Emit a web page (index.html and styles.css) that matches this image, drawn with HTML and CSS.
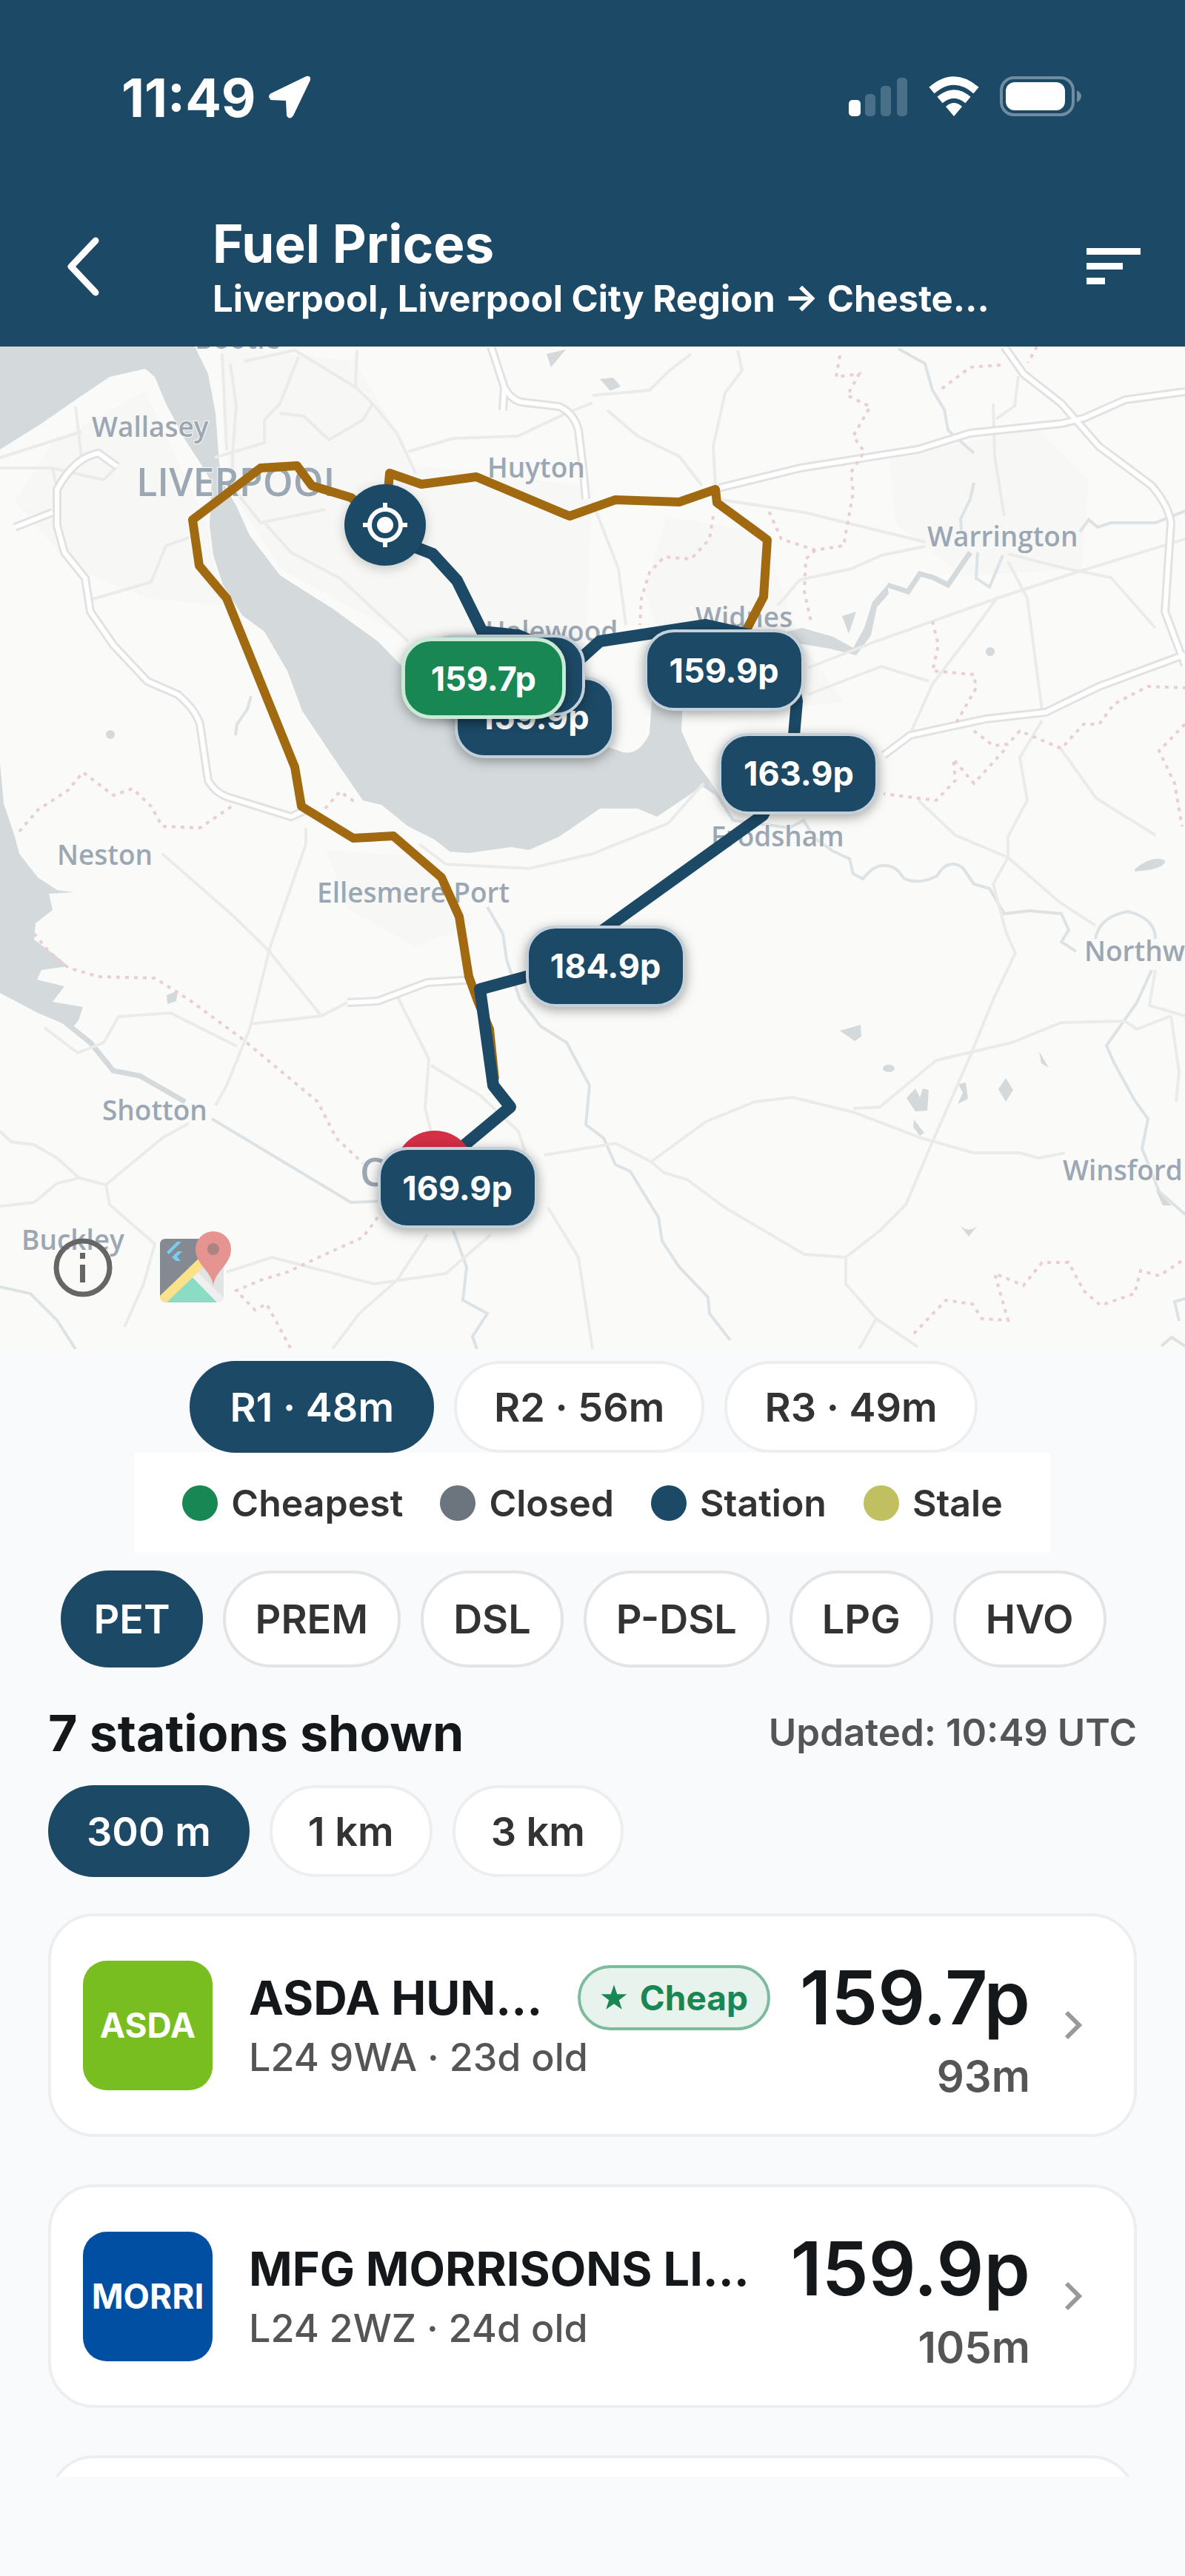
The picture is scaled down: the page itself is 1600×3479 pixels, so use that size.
FILE: index.html
```html
<!DOCTYPE html>
<html lang="en">
<head>
    <meta charset="UTF-8">
    <meta name="viewport" content="width=device-width, initial-scale=1.0">
    <title>Fuel Prices</title>
    <link rel="stylesheet" href="styles.css">
</head>
<body>
    <div class="app">
        <header class="header">
            <div class="status-bar">
                <div class="status-time">
                    <span>11:49</span>
                    <svg width="58" height="58" viewBox="0 0 58 58" aria-hidden="true">
                        <path d="M52 2 L4 25 Q0 28 4 32 L25 33 L26 54 Q29 59 33 54 L56 6 Q57 1 52 2 Z" fill="#fff" stroke="#fff" stroke-width="2"/>
                    </svg>
                </div>
                <svg width="318" height="56" viewBox="0 0 318 56" aria-hidden="true">
                    <!-- signal -->
                    <rect x="0" y="32" width="16" height="22" rx="5" fill="#fff"/>
                    <g fill="#4a6f88">
                        <rect x="22" y="24" width="14" height="30" rx="5"/>
                        <rect x="43" y="13" width="14" height="41" rx="5"/>
                        <rect x="65" y="2" width="14" height="52" rx="5"/>
                    </g>
                    <!-- wifi -->
                    <g fill="none" stroke="#fff" stroke-width="11">
                        <path d="M112 19 Q142 -7 172 19"/>
                        <path d="M123 32 Q142 16 161 32"/>
                    </g>
                    <path d="M131 41 Q142 31 153 41 L142 54 Z" fill="#fff"/>
                    <!-- battery -->
                    <rect x="206" y="2" width="97" height="50" rx="17" fill="none" stroke="#6f8ca0" stroke-width="4"/>
                    <rect x="212" y="8" width="80" height="38" rx="12" fill="#fff"/>
                    <path d="M308 19 Q314 22 314 27 Q314 32 308 35 Z" fill="#6f8ca0"/>
                </svg>
            </div>
            <div class="title-bar">
                <button class="icon-button" aria-label="Back">
                    <svg width="48" height="80" viewBox="0 0 48 80"><path d="M42 5 L9 40 L42 75" fill="none" stroke="#fff" stroke-width="9" stroke-linecap="round" stroke-linejoin="round"/></svg>
                </button>
                <div class="titles">
                    <h1>Fuel Prices</h1>
                    <p>Liverpool, Liverpool City Region → Cheste…</p>
                </div>
                <button class="icon-button" aria-label="Sort">
                    <svg width="73" height="52" viewBox="0 0 73 52"><path d="M0 1h73v9H0zM0 21h49v9H0zM0 41h25v9H0z" fill="#fff"/></svg>
                </button>
            </div>
        </header>

        <section class="map" aria-label="Route map">
            <svg class="map-tiles" viewBox="0 0 1600 1354">
                <rect width="1600" height="1354" fill="#fafaf8"/>

                <!-- built-up areas -->
                <g fill="#f7f7f5">
                    <path d="M296 0 L480 20 L560 160 L800 190 L790 420 L560 400 L378 300 L310 190 Z"/>
                    <path d="M70 130 L196 60 L280 240 L300 350 L200 340 L100 300 L20 210 Z"/>
                    <path d="M900 230 L1030 250 L1080 400 L1140 480 L930 500 L870 330 Z"/>
                    <path d="M1200 150 L1400 110 L1470 180 L1460 300 L1300 310 L1210 240 Z"/>
                    <path d="M440 680 L580 690 L640 780 L560 810 L470 760 Z"/>
                </g>

                <!-- water -->
                <g fill="#d4dadc">
                    <path d="M0 0 L263 0 L281 37 L291 90 L296 157 L301 184 L319 215 L337 255 L378 309 L449 354 L510 398 L541 430 L640 480 L833 545 Q860 558 877 523 L882 450 L1000 400 L1083 380 L1125 392 L1152 407 L1167 380 L1178 345 L1198 322 L1200 334 L1184 352 L1176 390 L1156 417 L1120 408 L1060 398 L940 440 L922 480 L920 519 L938 559 L958 586 L975 612 L948 594 L887 635 L861 624 L810 624 L755 662 L714 680 L690 676 L633 684 L607 682 L587 666 L551 648 L515 619 L490 613 L459 568 L408 492 L388 438 L357 385 L327 363 L301 322 L288 282 L283 242 L286 184 L276 166 L250 126 L224 77 L209 41 L196 30 L148 41 L102 72 L56 104 L0 139 Z"/>
                    <path d="M0 563 L5 617 L20 662 L26 685 L51 717 L77 734 L100 737 L66 739 L71 761 L48 779 L46 801 L77 824 L92 837 L56 842 L50 855 L87 864 L71 885 L112 892 L106 910 L98 920 L51 900 L0 873 Z"/>
                    <path d="M1134 924 L1162 916 L1163 932 L1154 938 Z"/>
                    <ellipse cx="1200" cy="975" rx="8" ry="5"/>
                    <path d="M1224 1015 L1236 1002 L1242 1014 L1246 1002 L1254 1004 L1252 1032 L1236 1033 Z"/>
                    <path d="M1234 1044 L1248 1062 L1242 1066 L1233 1054 Z"/>
                    <path d="M1294 996 L1304 994 L1307 1016 L1293 1023 L1300 1008 Z"/>
                    <path d="M1358 988 L1368 1004 L1358 1020 L1348 1003 Z"/>
                    <path d="M1403 952 L1416 974 L1406 968 Z"/>
                    <path d="M1532 706 Q1555 686 1573 694 Q1574 706 1532 709 Z"/>
                    <path d="M1296 1187 Q1308 1198 1320 1187 L1308 1202 Z"/>
                    <path d="M1560 1138 L1582 1160 L1570 1160 Z"/>
                    <path d="M1137 364 L1156 358 L1146 388 Z"/>
                    <path d="M810 44 L828 42 L838 54 L824 60 Z"/>
                    <path d="M225 876 L240 870 L238 884 L226 888 Z"/>
                    <circle cx="149" cy="524" r="6"/>
                    <circle cx="1337" cy="412" r="6"/>
                    <path d="M738 10 L764 4 L744 28 Z"/>
                </g>
                <g class="river">
                    <path class="wide" d="M77 904 L122 940 L153 978 L189 985 L250 1020"/>
                    <path d="M286 1043 L474 1156 L515 1154"/>
                    <path d="M339 472 L334 490 L320 510 L318 525"/>
                    <path class="wide" d="M1198 322 L1226 331 L1242 307 L1260 312 L1280 322 L1310 278"/>
                    <path d="M1320 278 L1318 313 L1336 325 L1354 282"/>
                    <path d="M1458 250 L1470 234 L1482 244 L1500 238 L1560 238 L1600 222"/>
                    <path d="M1315 184 L1310 206 L1297 233 L1298 250"/>
                    <path d="M1213 3 L1249 23 L1259 59 L1275 85 L1280 113 L1315 144"/>
                    <path d="M958 590 L990 640 L1066 650 L1085 640 L1100 664 L1124 681 L1147 692 L1152 712 L1165 719 Q1180 700 1193 701 Q1210 700 1220 718 Q1240 728 1265 715 Q1280 690 1300 704 L1315 726 L1336 732 L1356 766 L1390 762 L1433 766 L1443 788 L1433 804 L1453 817"/>
                    <path d="M1479 800 Q1484 770 1523 763 Q1560 772 1560 800"/>
                    <path d="M1555 842 L1535 886 L1494 944 L1504 967 L1532 1018 L1550 1043 L1542 1083 L1565 1141 L1600 1172"/>
                    <path d="M658 757 L679 793 L684 828 L702 882 L730 918 L765 940 L796 998 L791 1051 L815 1069 L831 1105 L851 1114 L889 1176 L894 1208 L917 1243 L956 1284 L958 1306 L986 1342"/>
                    <path d="M612 1194 L630 1243 L625 1288 L658 1306 L638 1337 L644 1354"/>
                    <path d="M0 1270 L41 1279 L77 1315 L102 1354"/>
                    <path d="M1600 1286 L1586 1290 L1592 1316 M1568 1350 L1582 1338 L1600 1350"/>
                </g>

                <!-- minor roads -->
                <g class="road">
                    <path d="M311 23 L319 81 L314 144 L314 190 L352 238 L439 220 M300 10 L306 140 M330 20 L398 5 L480 55 L503 77 L536 117 L561 171"/>
                    <path d="M482 5 L480 55 M403 14 L378 77 L357 99 L357 130 L290 150 M503 77 L490 99 L444 126 L410 94 L378 90"/>
                    <path d="M551 142 L612 124 L699 121 L765 90 L800 76 M357 238 L393 278 L459 313 L551 398"/>
                    <path d="M0 164 L71 164 L117 175 L140 180 L158 162 M122 342 L204 318 L224 269 L255 258 M110 150 L102 81 M0 150 L110 115 M71 164 L77 193"/>
                    <path d="M800 66 L877 59 L902 34 L933 10 M996 5 L1002 32 L979 63 L963 135 L966 188 M820 86 L861 121 L917 148 L948 188"/>
                    <path d="M968 206 L1086 224 L1249 264 M800 210 L835 300 L845 376 M1050 350 L1080 315 L1150 300 L1190 282 L1249 270"/>
                    <path d="M1341 77 L1343 148 L1356 229 M1375 40 L1370 80 L1345 98 M1361 290 L1387 340 L1407 492"/>
                    <path d="M1091 434 L1183 398 L1346 340 L1453 305 L1600 260 M1346 340 L1310 389 L1259 456 L1229 523"/>
                    <path d="M1361 280 L1440 300 L1500 312 L1560 380 M1091 470 L1190 432 L1254 452"/>
                    <path d="M1407 505 L1377 555 L1387 613 L1361 662 L1361 690 L1341 726 L1359 793 L1371 819 L1341 882 L1310 958 L1259 1074 L1223 1159 L1188 1194 L1142 1230 L1142 1266 L1183 1313 L1239 1351 M1183 1313 L1160 1354"/>
                    <path d="M1240 613 L1290 660 L1361 690 L1430 750 L1479 782 M1430 540 L1480 610 L1560 660"/>
                    <path d="M735 1092 L831 1076 L879 1101 L953 1047 L1019 1020 L1070 1014 L1152 1034 L1244 1069 L1315 1089 L1377 1089 L1402 1096 L1438 1089"/>
                    <path d="M879 1101 L897 1116 L928 1125 L979 1163 L1086 1226 L1142 1230 M1152 1029 L1188 1027 L1264 964 L1366 940 L1433 913 L1519 911 L1535 922 L1581 904"/>
                    <path d="M1581 904 L1592 980 L1588 1020 M1560 842 L1552 890 L1600 904"/>
                    <path d="M219 685 L316 770 L362 815 L434 904 M413 650 L413 672 L365 810 L337 922 L306 998 L291 1025 M337 915 L434 904 L469 886"/>
                    <path d="M0 1060 L15 1074 L46 1078 L77 1096 L107 1123 L143 1132 L219 1069 L255 1049 M143 1132 L148 1159 L209 1212 L194 1266 L168 1324"/>
                    <path d="M0 1161 L46 1156 L77 1130 L107 1123 M306 1250 L367 1230 L505 1266 L602 1252 L663 1199 M577 1199 L536 1261 L485 1306 L449 1354"/>
                    <path d="M536 877 L579 962 L574 1029 L582 1060 M582 971 L648 1011 L700 1060 L709 1087 M740 1163 L781 1230 L800 1354"/>
                    <path d="M566 672 L602 699 L714 705 L800 685 L902 644 L950 590 M60 920 L105 954 L140 940 L160 905 L230 900 L320 945"/>
                </g>

                <!-- motorways -->
                <g class="motorway-casing">
                    <path d="M20 244 L71 224 M158 162 L133 144 Q100 150 77 193 L77 242 L87 278 L115 313 L122 358 L153 403 L199 452 L240 470 Q264 490 270 510 L281 586 Q290 602 306 608 L393 635 L413 626"/>
                    <path d="M663 0 L681 55 Q690 72 704 75 L755 81 Q775 90 781 113 L788 171 L791 206 M679 86 L681 55"/>
                    <path d="M971 191 L1081 164 L1239 139 L1310 117 L1433 104 L1463 97 L1519 72 L1600 61"/>
                    <path d="M1356 0 L1382 37 L1433 77 L1484 135 L1555 188 Q1578 215 1581 238 L1573 358 L1600 430"/>
                    <path d="M1193 552 L1229 525 L1331 503 L1412 494 L1484 459 L1600 416"/>
                    <path d="M469 886 L510 884 L577 859 L640 855"/>
                </g>
                <g class="motorway">
                    <path d="M20 244 L71 224 M158 162 L133 144 Q100 150 77 193 L77 242 L87 278 L115 313 L122 358 L153 403 L199 452 L240 470 Q264 490 270 510 L281 586 Q290 602 306 608 L393 635 L413 626"/>
                    <path d="M663 0 L681 55 Q690 72 704 75 L755 81 Q775 90 781 113 L788 171 L791 206 M679 86 L681 55"/>
                    <path d="M971 191 L1081 164 L1239 139 L1310 117 L1433 104 L1463 97 L1519 72 L1600 61"/>
                    <path d="M1356 0 L1382 37 L1433 77 L1484 135 L1555 188 Q1578 215 1581 238 L1573 358 L1600 430"/>
                    <path d="M1193 552 L1229 525 L1331 503 L1412 494 L1484 459 L1600 416"/>
                    <path d="M469 886 L510 884 L577 859 L640 855"/>
                </g>

                <!-- county boundaries -->
                <g class="boundary">
                    <path d="M26 655 L51 626 L92 599 L112 575 L153 606 L179 597 L204 621 L219 648 L270 650 L316 619 M439 624 L459 601 L482 617"/>
                    <path d="M1134 12 L1129 41 L1160 37 L1144 66 L1175 81 L1152 121 L1167 142 L1149 170 L1152 197 L1139 269 L1101 275 L1055 260 L1037 220 M1101 275 L1088 287 L1086 331 L1096 376"/>
                    <path d="M963 229 L958 260 L933 287 L897 284 L877 305 L866 340 L864 376 M1351 25 L1310 28 L1269 59 M1400 0 L1388 22"/>
                    <path d="M1259 371 L1267 403 L1259 438 L1315 443 L1318 461 L1290 510 M1315 519 L1341 539 L1361 537 L1377 519 L1433 543 L1463 510 L1484 510 L1504 483 L1550 459 L1600 461"/>
                    <path d="M1356 545 L1315 590 L1287 557 L1290 586 L1264 613 L1193 604 M1600 510 L1565 546 L1586 590 L1596 648"/>
                    <path d="M1234 1333 L1277 1288 L1313 1293 L1326 1313 L1361 1315 L1343 1252 L1382 1268 L1407 1237 L1443 1237 L1463 1275 L1486 1295 L1532 1279 L1540 1248 L1565 1255 L1600 1232"/>
                    <path d="M46 793 L66 817 L92 839 L133 851 L209 853 L255 882 L327 935 L429 1020 L454 1069 L490 1103 M510 1176 L490 1203 L439 1226 L388 1250 L352 1261 L319 1275 L344 1301 L360 1293 L393 1354"/>
                </g>

                <g class="place">
                    <text x="263" y="3">Bootle</text>
                    <text x="124" y="122">Wallasey</text>
                    <text class="city" x="184" y="202">LIVERPOOL</text>
                    <text x="658" y="177">Huyton</text>
                    <text x="1252" y="270">Warrington</text>
                    <text x="939" y="379">Widnes</text>
                    <text x="655" y="398">Halewood</text>
                    <text x="960" y="675">Frodsham</text>
                    <text x="77" y="700">Neston</text>
                    <text x="428" y="751">Ellesmere Port</text>
                    <text x="1464" y="830">Northw</text>
                    <text x="138" y="1045">Shotton</text>
                    <text x="1435" y="1126">Winsford</text>
                    <text class="city" x="486" y="1134">C</text>
                    <text x="29" y="1220">Buckley</text>
                </g>

                <!-- alternative routes, then the selected one -->
                <g class="route-alt">
                    <path d="M520 241 L474 204 L421 188 L401 161 L352 164 L260 234 L269 296 L306 340 L398 568 L407 621 L477 664 L531 661 L596 717 L620 770 L633 851 L645 884 L661 922 L668 990"/>
                    <path d="M520 241 L526 171 L569 186 L643 176 L769 229 L831 207 L917 210 L966 193 L968 211 L1036 261 L1031 338 L1004 390"/>
                </g>
                <path class="route" d="M520 241 L561 271 L584 280 L617 316 L651 385 L700 390 L780 425 L810 398 L953 376 L1060 400 L1076 479 L1069 560 L1030 633 L820 784 L740 843 L648 868 L666 998 L689 1027 L618 1086"/>
            </svg>

            <span class="pin-end" style="left: 36.7%; top: 82.2%"></span>
            <span class="pin-start" style="left: 32.5%; top: 17.8%">
                <svg width="60" height="60" viewBox="0 0 60 60" aria-hidden="true">
                    <circle cx="30" cy="30" r="11" fill="#fff"/>
                    <circle cx="30" cy="30" r="21" fill="none" stroke="#fff" stroke-width="6"/>
                    <path d="M30 0v9M30 51v9M0 30h9M51 30h9" stroke="#fff" stroke-width="6"/>
                </svg>
            </span>
            <button class="pin" style="left: 45.1%; top: 37%">159.9p</button>
            <button class="pin" style="left: 42.6%; top: 32.8%" aria-label="Station"></button>
            <button class="pin cheapest" style="left: 40.8%; top: 33.1%">159.7p</button>
            <button class="pin" style="left: 61.1%; top: 32.3%">159.9p</button>
            <button class="pin" style="left: 67.4%; top: 42.6%">163.9p</button>
            <button class="pin" style="left: 51.1%; top: 61.8%">184.9p</button>
            <button class="pin" style="left: 38.6%; top: 83.9%">169.9p</button>

            <div class="map-credits">
                <button class="icon-button" aria-label="Map attribution">
                    <svg width="80" height="80" viewBox="0 0 80 80">
                        <circle cx="40" cy="40" r="36" fill="none" stroke="#666" stroke-width="7"/>
                        <path d="M36 20h7v8h-7zM36 36h7v24h-7z" fill="#666"/>
                    </svg>
                </button>
                <svg width="100" height="100" viewBox="0 0 100 100" aria-hidden="true">
                    <rect x="2" y="11" width="86" height="86" rx="8" fill="#e2e4e4"/>
                    <path d="M2 90 V19 Q2 11 10 11 H80 L50 48 Z" fill="#858992"/>
                    <path d="M11 97 L45 62 L79 97 Z" fill="#8bdcc4"/>
                    <path d="M45 62 L52 55 L88 91 Q86 97 79 97 Z" fill="#efefef"/>
                    <path d="M2 88 L58 34 L60 50 L11 97 Q2 97 2 88 Z" fill="#fae28b"/>
                    <path d="M11 29 L25 15 H31 L14 32 Z M18 36 L26 28 H32 L25 35 L30 41 H24 Z" fill="#79cdf2"/>
                    <path d="M74 75 C73 56 50 46 50 25 A24 24 0 0 1 98 25 C98 46 75 56 74 75 Z" fill="#e69492"/>
                    <circle cx="74" cy="25" r="8" fill="#ad847f"/>
                </svg>
            </div>
        </section>

        <div class="routes chips">
            <button class="chip active">R1 · 48m</button>
            <button class="chip">R2 · 56m</button>
            <button class="chip">R3 · 49m</button>
        </div>

        <ul class="legend">
            <li><span class="dot cheapest"></span>Cheapest</li>
            <li><span class="dot closed"></span>Closed</li>
            <li><span class="dot station"></span>Station</li>
            <li><span class="dot stale"></span>Stale</li>
        </ul>

        <div class="fuels chips">
            <button class="chip active">PET</button>
            <button class="chip">PREM</button>
            <button class="chip">DSL</button>
            <button class="chip">P-DSL</button>
            <button class="chip">LPG</button>
            <button class="chip">HVO</button>
        </div>

        <div class="summary">
            <h2>7 stations shown</h2>
            <span>Updated: 10:49 UTC</span>
        </div>

        <div class="distances chips">
            <button class="chip active">300 m</button>
            <button class="chip">1 km</button>
            <button class="chip">3 km</button>
        </div>

        <main class="stations">
            <a class="station-card" href="#asda">
                <span class="brand asda">ASDA</span>
                <div class="info">
                    <div class="name-row">
                        <h3>ASDA HUN…</h3>
                        <span class="badge">
                            <svg width="38" height="38" viewBox="0 0 24 24" aria-hidden="true"><path d="M12 1 L14.700 9 H23 L16.300 14 L18.800 22 L12 17.200 L5.200 22 L7.700 14 L1 9 H9.300 Z" fill="currentColor"/></svg>
                            Cheap
                        </span>
                    </div>
                    <p>L24 9WA · 23d old</p>
                </div>
                <div class="price">
                    <strong>159.7p</strong>
                    <span>93m</span>
                </div>
                <svg class="chevron" width="26" height="40" viewBox="0 0 26 40" aria-hidden="true"><path d="M3 3 L20 20 L3 37"/></svg>
            </a>
            <a class="station-card" href="#morrisons">
                <span class="brand morrisons">MORRI</span>
                <div class="info">
                    <div class="name-row">
                        <h3>MFG MORRISONS LI…</h3>
                    </div>
                    <p>L24 2WZ · 24d old</p>
                </div>
                <div class="price">
                    <strong>159.9p</strong>
                    <span>105m</span>
                </div>
                <svg class="chevron" width="26" height="40" viewBox="0 0 26 40" aria-hidden="true"><path d="M3 3 L20 20 L3 37"/></svg>
            </a>
            <div class="station-card"></div>
        </main>
    </div>
</body>
</html>
```
FILE: styles.css
```css
* {
    box-sizing: border-box;
}
body {
    margin: 0;
    font-family: Inter, "Liberation Sans", sans-serif;
    background-color: #f8fafc;
    color: #15181b;
}
h1, h2, h3, p, ul {
    margin: 0;
    padding: 0;
}
button {
    font-family: inherit;
    cursor: pointer;
}
.app {
    display: flex;
    flex-direction: column;
    height: 100vh;
    padding-bottom: 134px;
}
.app > * {
    flex-shrink: 0;
}
.icon-button {
    display: flex;
    padding: 0;
    border: none;
    background: none;
}

/* header */
.header {
    background-color: #1c4966;
    color: #fff;
}
.status-bar {
    display: flex;
    justify-content: space-between;
    align-items: center;
    height: 262px;
    padding: 0 136px 0 164px;
}
.status-time {
    display: flex;
    align-items: center;
    gap: 16px;
    font-size: 72px;
    font-weight: 700;
}
.title-bar {
    display: flex;
    align-items: center;
    height: 206px;
    padding: 0 60px 10px 87px;
}
.title-bar .icon-button:first-child {
    width: 200px;
}
.titles {
    flex: 1;
    min-width: 0;
    padding-top: 4px;
}
.titles h1 {
    font-size: 71px;
    line-height: 84px;
    font-weight: 700;
}
.titles p {
    font-size: 49px;
    line-height: 66px;
    font-weight: 700;
    white-space: nowrap;
}

/* map */
.map {
    position: relative;
    overflow: hidden;
}
.map-tiles {
    display: block;
    width: 100%;
}
.river path {
    fill: none;
    stroke: #dde3e4;
    stroke-width: 4;
}
.river .wide {
    stroke: #d4dadc;
    stroke-width: 7;
}
.road path {
    fill: none;
    stroke: #ebebea;
    stroke-width: 4;
}
.motorway-casing {
    fill: none;
    stroke: #e2e2e2;
    stroke-width: 12;
}
.motorway {
    fill: none;
    stroke: #fff;
    stroke-width: 6;
}
.boundary path {
    fill: none;
    stroke: #e9cfd2;
    stroke-width: 4;
    stroke-dasharray: 5 7;
}
.place text {
    font-family: "Open Sans", sans-serif;
    font-size: 37px;
    font-weight: 600;
    fill: #9ca7b4;
    stroke: #fafaf8;
    stroke-width: 2;
    paint-order: stroke;
}
.place .city {
    font-size: 52px;
}
.route-alt path {
    fill: none;
    stroke: #a16a10;
    stroke-width: 12;
    stroke-linejoin: round;
}
.route {
    fill: none;
    stroke: #1c4966;
    stroke-width: 16;
    stroke-linejoin: round;
}
.pin,
.pin-start,
.pin-end {
    position: absolute;
    transform: translate(-50%, -50%);
}
.pin {
    width: 216px;
    height: 110px;
    padding: 0;
    border: 4px solid #c3d0da;
    border-radius: 40px;
    background-color: #1c4966;
    box-shadow: 0 4px 16px rgba(0, 0, 0, 0.35);
    color: #fff;
    font-size: 45px;
    font-weight: 700;
}
.pin.cheapest {
    width: 222px;
    border: 5px solid #c9ead5;
    background-color: #198754;
}
.pin-start {
    display: flex;
    align-items: center;
    justify-content: center;
    width: 110px;
    height: 110px;
    border-radius: 50%;
    background-color: #1c4966;
    box-shadow: 0 4px 16px rgba(0, 0, 0, 0.2);
}
.pin-end {
    width: 108px;
    height: 108px;
    border-radius: 50%;
    background-color: #d32f45;
}
.map-credits {
    position: absolute;
    left: 72px;
    bottom: 60px;
    display: flex;
    align-items: center;
    gap: 62px;
}

/* chips */
.chips {
    display: flex;
    gap: 27px;
}
.chip {
    height: 124px;
    padding: 0 48px;
    border: 4px solid #edeef0;
    border-radius: 62px;
    background-color: #fff;
    color: #333;
    font-size: 54px;
    font-weight: 600;
}
.chip.active {
    border-color: #1c4966;
    background-color: #1c4966;
    color: #fff;
}
.routes {
    justify-content: center;
    padding: 16px 24px 0 0;
}
.routes .chip {
    padding: 0 50px;
}
.fuels {
    justify-content: center;
    padding: 24px 24px 0 0;
}
.fuels .chip {
    height: 131px;
    padding: 0 40px;
    border-color: #e3e4e5;
    border-radius: 66px;
}
.fuels .chip.active {
    border-color: #1c4966;
}
.distances {
    padding: 0 65px;
}

.legend {
    display: flex;
    align-self: center;
    gap: 50px;
    height: 135px;
    padding: 0 64px;
    background-color: #fff;
    color: #333;
    list-style: none;
    font-size: 50px;
    font-weight: 600;
}
.legend li {
    display: flex;
    align-items: center;
    gap: 18px;
}
.dot {
    width: 48px;
    height: 48px;
    border-radius: 50%;
}
.dot.cheapest {
    background-color: #198754;
}
.dot.closed {
    background-color: #6c757d;
}
.dot.station {
    background-color: #1c4966;
}
.dot.stale {
    background-color: #c0c060;
}

.summary {
    display: flex;
    justify-content: space-between;
    align-items: center;
    height: 159px;
    padding: 16px 65px 0;
}
.summary h2 {
    font-size: 68px;
    font-weight: 700;
}
.summary span {
    color: #555;
    font-size: 51px;
    font-weight: 600;
}

/* station list */
.app > .stations {
    display: flex;
    flex: 1;
    flex-direction: column;
    gap: 64px;
    min-height: 0;
    margin-top: 49px;
    padding: 0 65px;
    overflow: hidden;
}
.station-card {
    display: flex;
    flex-shrink: 0;
    align-items: center;
    height: 302px;
    padding: 0 66px 0 43px;
    border: 4px solid #edeef0;
    border-radius: 62px;
    background-color: #fff;
    color: inherit;
    text-decoration: none;
}
.brand {
    width: 175px;
    height: 175px;
    border-radius: 32px;
    color: #fff;
    font-size: 46px;
    line-height: 175px;
    font-weight: 700;
    text-align: center;
}
.brand.asda {
    background-color: #78be20;
}
.brand.morrisons {
    background-color: #004fa3;
}
.info {
    flex: 1;
    min-width: 0;
    margin-left: 49px;
}
.name-row {
    display: flex;
    align-items: center;
    justify-content: space-between;
    height: 88px;
    white-space: nowrap;
}
.info h3 {
    font-size: 63px;
    font-weight: 700;
}
.info p {
    color: #555;
    font-size: 52px;
    line-height: 74px;
    font-weight: 500;
}
.badge {
    display: flex;
    align-items: center;
    gap: 16px;
    height: 88px;
    padding: 0 26px;
    border: 4px solid #7dbb9d;
    border-radius: 44px;
    background-color: #e8f3ee;
    color: #198754;
    font-size: 46px;
    font-weight: 700;
}
.price {
    display: flex;
    flex-direction: column;
    align-items: flex-end;
    margin-left: 40px;
    padding-top: 14px;
}
.price strong {
    font-size: 100px;
    line-height: 124px;
    font-weight: 600;
}
.price span {
    color: #555;
    font-size: 58px;
    line-height: 88px;
    font-weight: 600;
}
.chevron {
    margin: 0 2px 0 46px;
}
.chevron path {
    fill: none;
    stroke: #999;
    stroke-width: 6;
}
```
